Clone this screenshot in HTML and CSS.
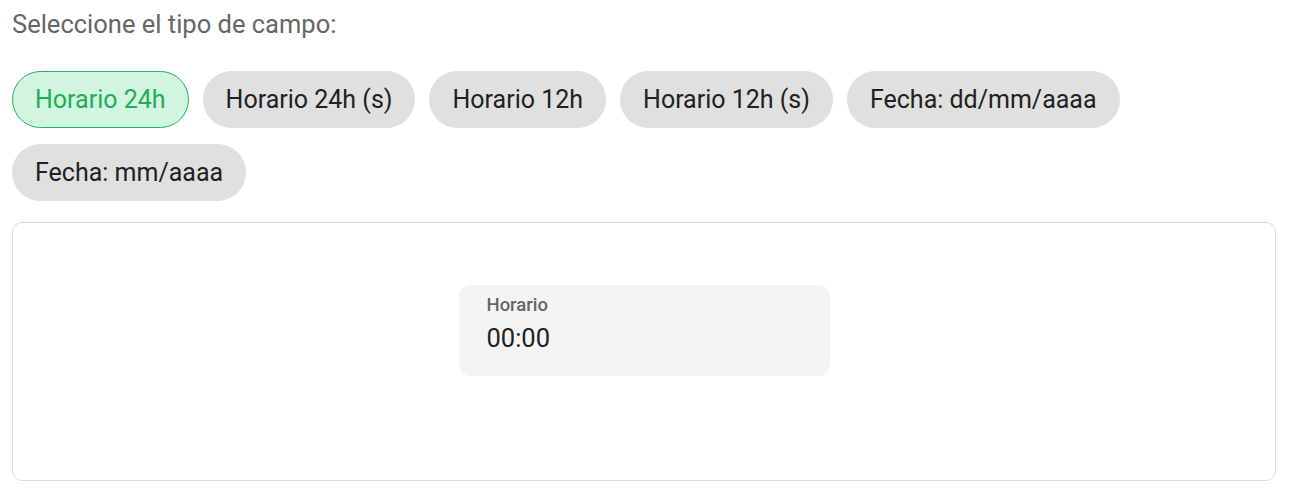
FILE: index.html
```html
<!DOCTYPE html>
<html lang="es">
<head>
    <meta charset="UTF-8">
    <meta name="viewport" content="width=device-width, initial-scale=1.0">
    <title>Tipo de campo</title>
    <link rel="stylesheet" href="styles.css">
</head>
<body>
    <div class="page">
        <p class="prompt">Seleccione el tipo de campo:</p>
        <div class="chips">
            <button class="chip active">Horario 24h</button>
            <button class="chip">Horario 24h (s)</button>
            <button class="chip">Horario 12h</button>
            <button class="chip">Horario 12h (s)</button>
            <button class="chip">Fecha: dd/mm/aaaa</button>
            <button class="chip">Fecha: mm/aaaa</button>
        </div>
        <div class="preview">
            <div class="field">
                <label class="field-label">Horario</label>
                <div class="field-value">00:00</div>
            </div>
        </div>
    </div>
</body>
</html>
```

FILE: styles.css
```css
*{
    margin: 0;
    padding: 0;
    box-sizing: border-box;
}
body{
    font-family: Roboto, "Liberation Sans", sans-serif;
    background-color: #fff;
    color: #212121;
}
.page{
    padding: 8px 13px 0 12px;
}
.prompt{
    font-size: 25.5px;
    line-height: 32px;
    color: #666;
}
.chips{
    display: flex;
    flex-wrap: wrap;
    gap: 16px 14px;
    margin-top: 31px;
}
.chip{
    font-family: inherit;
    font-size: 25px;
    line-height: 27px;
    padding: 14px 22px;
    border: 1px solid transparent;
    border-radius: 29px;
    background-color: #e0e0e0;
    color: #212121;
    cursor: pointer;
}
.chip.active{
    background-color: #d1f5e0;
    border-color: #1fb35a;
    color: #1fad55;
}
.preview{
    margin-top: 21px;
    border: 1px solid #dcdcdc;
    border-radius: 10px;
    height: 259px;
    padding-top: 62px;
    display: flex;
    justify-content: center;
    align-items: flex-start;
}
.field{
    width: 371px;
    height: 91px;
    background-color: #f4f4f4;
    border-radius: 12px;
    padding: 10px 28px;
}
.field-label{
    display: block;
    font-size: 18.5px;
    font-weight: 500;
    line-height: 20px;
    color: #666;
}
.field-value{
    margin-top: 8px;
    font-size: 25.5px;
    line-height: 30px;
    color: #212121;
}
```
